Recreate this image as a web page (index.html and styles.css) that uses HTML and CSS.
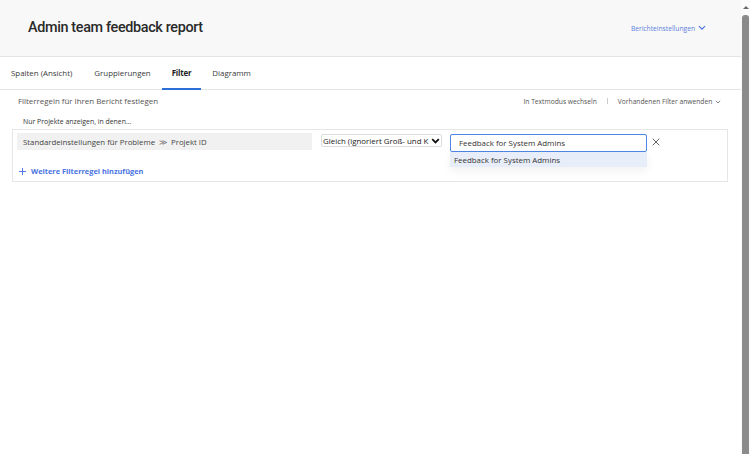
FILE: index.html
```html
<!DOCTYPE html>
<html lang="de">
<head>
<meta charset="utf-8">
<title>Admin team feedback report</title>
<link rel="stylesheet" href="styles.css">
</head>
<body>
<div class="window">
  <div class="page">
    <header class="header">
      <h1 class="title">Admin team feedback report</h1>
      <a class="settings">Berichteinstellungen
        <svg class="chev" width="8" height="6" viewBox="0 0 8 6"><path d="M1 1.2 L4 4.2 L7 1.2" fill="none" stroke="#4a74e2" stroke-width="1.2"/></svg>
      </a>
    </header>
    <nav class="tabs">
      <span class="tab">Spalten (Ansicht)</span>
      <span class="tab">Gruppierungen</span>
      <span class="tab active">Filter</span>
      <span class="tab">Diagramm</span>
    </nav>
    <section class="content">
      <div class="toolbar">
        <span class="lead">Filterregeln für Ihren Bericht festlegen</span>
        <div class="actions">
          <span>In Textmodus wechseln</span>
          <span class="sep"></span>
          <span>Vorhandenen Filter anwenden
            <svg width="6" height="4" viewBox="0 0 6 4"><path d="M0.8 0.8 L3 3 L5.2 0.8" fill="none" stroke="#666" stroke-width="0.8"/></svg>
          </span>
        </div>
      </div>
      <div class="subhead">Nur Projekte anzeigen, in denen...</div>
      <div class="filterbox">
        <div class="rule">
          <div class="field">Standardeinstellungen für Probleme <span class="arrows">≫</span> Projekt ID</div>
          <div class="select">Gleich (ignoriert Groß- und K
            <svg width="9" height="6" viewBox="0 0 9 6"><path d="M1.2 1.2 L4.5 4.5 L7.8 1.2" fill="none" stroke="#111" stroke-width="1.8"/></svg>
          </div>
          <div class="valuewrap">
            <div class="input">Feedback for System Admins</div>
            <div class="dropdown">Feedback for System Admins</div>
          </div>
          <svg class="close" width="8" height="8" viewBox="0 0 8 8"><path d="M0.7 0.7 L7.3 7.3 M7.3 0.7 L0.7 7.3" stroke="#666" stroke-width="1"/></svg>
        </div>
        <div class="add">
          <svg width="7" height="7" viewBox="0 0 8 8"><path d="M4 0 V8 M0 4 H8" stroke="#4a74e2" stroke-width="1.1"/></svg>
          <span>Weitere Filterregel hinzufügen</span>
        </div>
      </div>
    </section>
  </div>
  <div class="scrollbar">
    <div class="arrow"></div>
    <div class="thumb"></div>
  </div>
</div>
</body>
</html>
```
FILE: styles.css
```css
* { box-sizing: border-box; }
html, body { margin: 0; padding: 0; }
body {
  font-family: "Open Sans", "Noto Sans", sans-serif;
  color: #2c2c2c;
  background: #fff;
}
.window {
  display: flex;
  width: 750px;
  height: 454px;
  overflow: hidden;
}
.page {
  flex: 1;
  display: flex;
  flex-direction: column;
}
.header {
  height: 57px;
  background: #f8f8f8;
  border-bottom: 1px solid #e4e4e4;
  display: flex;
  align-items: center;
  justify-content: space-between;
  padding: 0 35px 0 28px;
}
.title {
  margin: 0;
  font-family: Roboto, "Open Sans", sans-serif;
  font-size: 14.4px;
  font-weight: 500;
  color: #2a2a2a;
  letter-spacing: -0.35px;
  position: relative;
  top: -1px;
}
.settings {
  font-size: 6.7px;
  color: #5b7fe0;
  display: flex;
  align-items: center;
  gap: 3px;
}
.tabs {
  height: 33px;
  border-bottom: 1px solid #e4e4e4;
  display: flex;
  align-items: stretch;
}
.tab {
  padding: 0 11px;
  display: flex;
  align-items: center;
  font-size: 7.9px;
  color: #3a3a3a;
  border-bottom: 2px solid transparent;
  margin-bottom: -1px;
}
.tab.active {
  font-weight: 700;
  color: #222;
  border-bottom-color: #2c6fd6;
  padding: 0 10px;
  letter-spacing: -0.2px;
}
.content {
  padding: 0 13px 0 12px;
}
.toolbar {
  display: flex;
  justify-content: space-between;
  align-items: center;
  height: 22px;
  padding: 0 0 0 6px;
}
.lead {
  font-size: 7.9px;
  color: #555;
}
.actions {
  display: flex;
  align-items: center;
  gap: 9px;
  font-size: 6.7px;
  color: #555;
  padding-right: 7px;
}
.actions svg { margin-left: 1px; }
.sep {
  width: 1px;
  height: 6px;
  background: #ccc;
  margin: 0 1px;
}
.subhead {
  font-size: 6.9px;
  color: #333;
  padding: 5px 0 0 11px;
  height: 17px;
}
.filterbox {
  border: 1px solid #e6e6e6;
  height: 53px;
  padding: 3px 4px 0 4px;
}
.rule {
  display: flex;
  align-items: flex-start;
}
.field {
  width: 295px;
  height: 17px;
  background: #f1f1f1;
  font-size: 7.8px;
  color: #444;
  display: flex;
  align-items: center;
  padding-left: 6px;
  gap: 4px;
}
.arrows { color: #666; font-size: 8px; }
.select {
  margin: 1px 0 0 9px;
  width: 121px;
  height: 13px;
  border: 1px solid #dcdcdc;
  border-radius: 2px;
  font-size: 7.9px;
  color: #222;
  display: flex;
  align-items: center;
  justify-content: space-between;
  padding: 0 1px 0 1px;
  white-space: nowrap;
  overflow: hidden;
}
.valuewrap {
  margin: 1px 0 0 8px;
  width: 197px;
  position: relative;
}
.input {
  height: 18px;
  border: 1px solid #4d86e6;
  border-radius: 2px;
  font-size: 7.9px;
  color: #333;
  display: flex;
  align-items: center;
  padding-left: 8px;
}
.dropdown {
  position: absolute;
  left: 0;
  top: 18px;
  width: 197px;
  height: 15px;
  background: #e8eef9;
  font-size: 7.9px;
  font-weight: 500;
  color: #333;
  display: flex;
  align-items: center;
  padding-left: 4px;
  box-shadow: 0 4px 10px rgba(0,0,0,0.06);
}
.close {
  margin: 5px 0 0 5px;
}
.add {
  margin-top: 14px;
  padding-left: 2px;
  display: flex;
  align-items: center;
  gap: 5px;
  font-size: 7.4px;
  font-weight: 700;
  color: #4a74e2;
}
.scrollbar {
  width: 9px;
  background: #fbfbfb;
  display: flex;
  flex-direction: column;
  align-items: center;
}
.arrow {
  margin-top: 6px;
  width: 0;
  height: 0;
  border-left: 3.5px solid transparent;
  border-right: 3.5px solid transparent;
  border-bottom: 3.5px solid #6a6a6a;
}
.thumb {
  margin-top: 6px;
  width: 7px;
  flex: 1;
  background: #8b8b8b;
  border-radius: 3px 3px 0 0;
}
```
